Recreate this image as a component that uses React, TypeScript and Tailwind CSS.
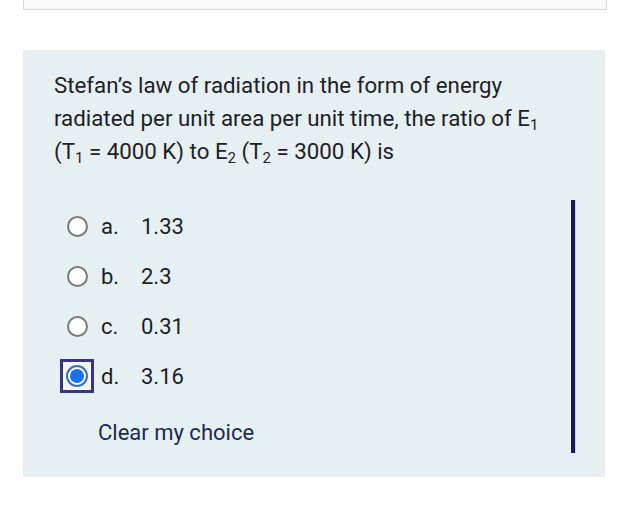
import React from "react";

const options = [
  { letter: "a.", value: "1.33" },
  { letter: "b.", value: "2.3" },
  { letter: "c.", value: "0.31" },
  { letter: "d.", value: "3.16", checked: true },
];

const Radio = ({ checked }: { checked?: boolean }) => {
  if (checked) {
    return (
      <div className="w-[34px] h-[34px] border-[3px] border-[#3b3484] bg-[#f4f8fb] flex items-center justify-center">
        <div className="w-[22px] h-[22px] rounded-full border-2 border-[#2f6fcf] bg-white flex items-center justify-center">
          <div className="w-[14px] h-[14px] rounded-full bg-[#1a73e8]" />
        </div>
      </div>
    );
  }
  return (
    <div className="w-[34px] h-[34px] flex items-center justify-center">
      <div className="w-[21px] h-[21px] rounded-full border-2 border-[#7a7a7a] bg-white" />
    </div>
  );
};

const App = () => {
  return (
    <div
      className="w-[630px] h-[511px] bg-white relative overflow-hidden"
      style={{ fontFamily: "Roboto, 'Liberation Sans', sans-serif" }}
    >
      <div className="mx-[23px] h-[10px] border-x border-b border-[#d6d9da] bg-[#f7f9f9]" />
      <div className="mt-[40px] ml-[23px] w-[582px] h-[427px] bg-[#e6f0f3] relative">
        <div className="pl-[31px] pt-[19px] text-[22.3px] leading-[33px] text-[#1d2125] pr-[20px] whitespace-nowrap">
          Stefan’s law of radiation in the form of energy
          <br />
          radiated per unit area per unit time, the ratio of E
          <sub className="text-[15px]">1</sub>
          <br />
          (T<sub className="text-[15px]">1</sub> = 4000 K) to E
          <sub className="text-[15px]">2</sub> (T
          <sub className="text-[15px]">2</sub> = 3000 K) is
        </div>

        <div className="mt-[41px] ml-[37px] flex flex-col gap-[16px]">
          {options.map((o) => (
            <div key={o.letter} className="flex items-center h-[34px]">
              <Radio checked={o.checked} />
              <span className="ml-[7px] w-[40px] text-[22px] text-[#1d2125]">{o.letter}</span>
              <span className="text-[22px] text-[#1d2125]">{o.value}</span>
            </div>
          ))}
        </div>

        <div className="mt-[23px] ml-[75px] text-[22px] text-[#1d2a50]">Clear my choice</div>

        <div className="absolute left-[548px] top-[150px] w-[5px] h-[253px] bg-[#1b1a5e] border-r border-[#c8cdf0]" />
      </div>
    </div>
  );
};

export default App;
